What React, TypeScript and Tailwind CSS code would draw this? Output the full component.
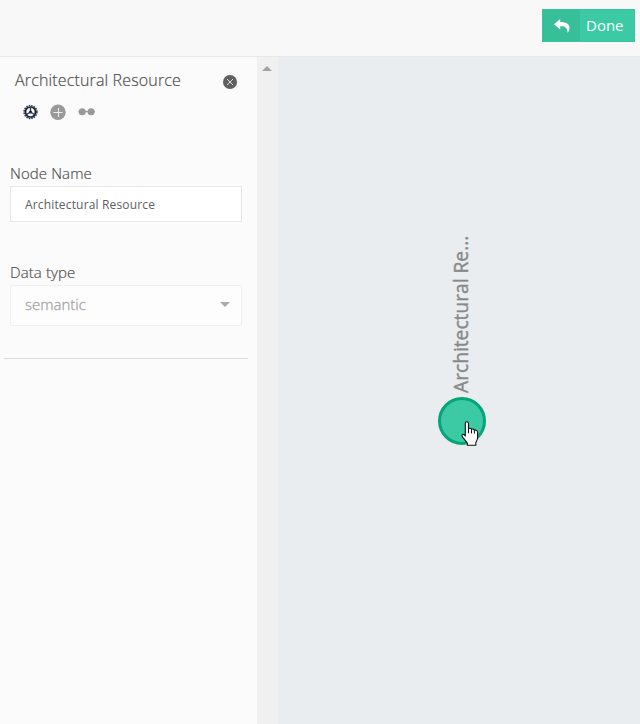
function GearIcon() {
  return (
    <svg className="block h-4 w-4" viewBox="0 0 16 16" fill="none">
      <circle cx="7.5" cy="8" r="6.4" stroke="#2b3445" strokeWidth="1.5" strokeDasharray="1.6 0.9" />
      <circle cx="7.5" cy="8" r="5" stroke="#172033" strokeWidth="1.7" />
      <circle cx="7.5" cy="8" r="1.6" fill="#172033" />
      <path d="M7.5 8V3.5M7.5 8L3.5 10.5M7.5 8L11.5 10.5" stroke="#26324a" strokeWidth="1.3" />
    </svg>
  );
}

function PlusIcon() {
  return (
    <svg className="block h-4 w-4" viewBox="0 0 16 16" fill="none">
      <circle cx="8" cy="8.3" r="7.7" fill="#999" />
      <path d="M3.5 8.5H12.5M8.5 4V13" stroke="#eee" strokeWidth="1" />
    </svg>
  );
}

function GlassesIcon() {
  return (
    <svg className="block h-2 w-[18px]" viewBox="0 0 18 8" fill="none">
      <path d="M0.5 3.6H17" stroke="#999" strokeWidth="1.4" />
      <circle cx="4.2" cy="3.8" r="3.5" fill="#999" />
      <circle cx="13.1" cy="3.8" r="3.5" fill="#999" />
    </svg>
  );
}

function CloseIcon() {
  return (
    <svg className="block h-[14px] w-[14px]" viewBox="0 0 14 14" fill="none">
      <circle cx="7" cy="7" r="7" fill="#5f5f61" />
      <path d="M4 4L10 10M10 4L4 10" stroke="#ddd" strokeWidth="1" />
    </svg>
  );
}

function HandCursor() {
  return (
    <svg className="absolute left-[182px] top-[364px] h-[26px] w-[19px]" viewBox="-0.8 0 19 26">
      <path
        d="M4.5 15V2.4a1.6 1.6 0 0 1 3.2 0v5.2c.8-.7 2.8-.5 3 .8 1-.7 2.6-.3 2.9.9 1.4-.5 3.2.1 3.2 1.8v5.2c0 2.6-1.2 4-1.8 5.6v2.3H6.6v-2L1.6 15.8c-1.2-2.2 1-3.6 2.9-.8z"
        fill="#fff"
        stroke="#111"
        strokeWidth="1.1"
        strokeLinejoin="round"
      />
      <path d="M7.7 7.6v4.7M10.7 8.4v4M13.6 9.3v3.3" stroke="#111" strokeWidth="1" />
    </svg>
  );
}

export default function App() {
  return (
    <div className="flex h-[724px] w-[640px] flex-col overflow-hidden bg-[#fbfbfb] font-['Open_Sans',sans-serif] text-[#666]">
      <header className="flex h-[57px] shrink-0 items-start justify-end border-b border-[#e7e8e9] bg-[#f8f8f8] pr-[5px] pt-[9px]">
        <button className="flex h-[33px] w-[93px] border border-[#36c69d] bg-[#3bcaa3] text-white">
          <span className="flex h-full w-[37px] items-center justify-center bg-[#36bf98]">
            <svg className="h-[14px] w-4" viewBox="0 0 16 14">
              <path d="M6.2 0L0 5.2L6.2 10.4V7.2C11 7 13.3 8.2 13.7 14C16.8 9.5 16.8 3.1 6.2 3.1Z" fill="#fff" />
            </svg>
          </span>
          <span className="flex h-full flex-1 items-center pl-[6px] text-[15px]">Done</span>
        </button>
      </header>
      <div className="flex min-h-0 flex-1">
        <aside className="flex w-[257px] shrink-0 flex-col">
          <div className="flex h-[39px] items-start justify-between pl-[15px] pr-5 pt-3">
            <h1 className="text-[16px] leading-[22px] font-light tracking-[0.15px] text-[#444] [-webkit-text-stroke:0.2px_#666]">
              Architectural Resource
            </h1>
            <button className="mt-[6px]" aria-label="Close">
              <CloseIcon />
            </button>
          </div>
          <div className="flex h-8 items-center pl-[23px]">
            <GearIcon />
            <span className="ml-[11px]"><PlusIcon /></span>
            <span className="ml-3"><GlassesIcon /></span>
          </div>
          <div className="mt-[35px] flex flex-col pl-[10px] pr-[15px]">
            <label className="h-[23px] text-[15px] leading-5 font-light tracking-[0.1px] text-[#444] [-webkit-text-stroke:0.2px_#666]">
              Node Name
            </label>
            <div className="flex h-9 items-center border border-[#e5e6e7] bg-white px-[14px] pt-[2px] text-[12px] tracking-[0.16px] text-[#606060]">
              Architectural Resource
            </div>
            <label className="mt-10 h-[23px] text-[15px] leading-5 font-light tracking-[0.1px] text-[#444] [-webkit-text-stroke:0.2px_#666]">
              Data type
            </label>
            <div className="flex h-[41px] items-center justify-between rounded-[2px] border border-[#f0f0f0] bg-[#fdfdfd] pb-[2px] pl-[14px] pr-[11px] text-[15px] font-light text-[#999] [-webkit-text-stroke:0.3px_#aaa]">
              <span>semantic</span>
              <svg className="h-[5px] w-[10px]" viewBox="0 0 10 5"><path d="M0 0H10L5 5Z" fill="#aaa" /></svg>
            </div>
          </div>
          <div className="ml-1 mr-[9px] mt-8 border-t border-[#dcdcdc]" />
        </aside>
        <div className="flex w-[21px] shrink-0 justify-center bg-[#f0f0f0] pr-px pt-[9px]">
          <svg className="h-[5px] w-[10px]" viewBox="0 0 10 5"><path d="M0 5H10L5 0Z" fill="#a3a3a3" /></svg>
        </div>
        <main className="relative flex-1 bg-[#e9edf0]">
          <div className="absolute left-[170px] top-[176px] h-40 w-[26px] rotate-180 whitespace-nowrap text-[19.2px] leading-[26px] text-[#888] [-webkit-text-stroke:0.4px_#888] [writing-mode:vertical-rl]">
            Architectural Re...
          </div>
          <div className="absolute left-[160px] top-[340px] h-12 w-12 rounded-full border-[3px] border-[#05a579] bg-[#3bcaa3]" />
          <HandCursor />
        </main>
      </div>
    </div>
  );
}
